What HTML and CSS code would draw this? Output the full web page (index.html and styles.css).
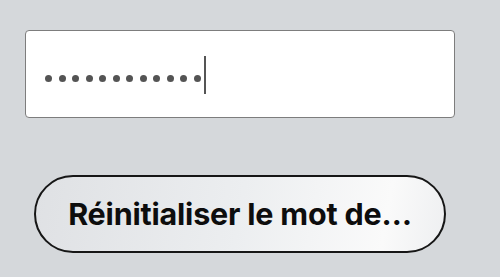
FILE: index.html
```html
<!DOCTYPE html>
<html lang="fr">
<head>
<meta charset="utf-8">
<link rel="stylesheet" href="styles.css">
</head>
<body>
<div class="page">
  <div class="field" aria-label="Mot de passe">
    <div class="dots">
      <span class="dot"></span><span class="dot"></span><span class="dot"></span><span class="dot"></span>
      <span class="dot"></span><span class="dot"></span><span class="dot"></span><span class="dot"></span>
      <span class="dot"></span><span class="dot"></span><span class="dot"></span><span class="dot"></span>
    </div>
    <span class="caret"></span>
  </div>
  <button class="reset">Réinitialiser le mot de…</button>
</div>
</body>
</html>
```
FILE: styles.css
```css
html, body {
  margin: 0;
  padding: 0;
  background: #d5d8db;
  font-family: Inter, "Liberation Sans", sans-serif;
}
.page {
  display: flex;
  flex-direction: column;
  align-items: flex-start;
  padding: 30px 0 0 25px;
}
.field {
  box-sizing: border-box;
  width: 430px;
  height: 88px;
  background: #ffffff;
  border: 1px solid #7d7d7d;
  border-radius: 4px;
  display: flex;
  align-items: center;
  padding-left: 19px;
}
.dots {
  display: flex;
  gap: 6.5px;
  align-items: center;
  margin-top: 8px;
}
.dot {
  width: 7px;
  height: 7px;
  border-radius: 50%;
  background: #545454;
}
.caret {
  width: 2px;
  height: 38px;
  background: #555555;
  margin-left: 3px;
  margin-top: 2px;
}
.reset {
  box-sizing: border-box;
  margin: 57px 0 0 9px;
  width: 412px;
  height: 78px;
  border: 2px solid #161616;
  border-radius: 39px;
  background: linear-gradient(100deg, #dfe1e4 0%, #eceef0 50%, #fafafa 85%, #eeeff1 100%);
  font-family: Inter, "Liberation Sans", sans-serif;
  font-weight: 700;
  font-size: 30.5px;
  color: #0d0d0d;
  padding: 0 0 2px 0;
  text-align: center;
  letter-spacing: -0.2px;
}
```
